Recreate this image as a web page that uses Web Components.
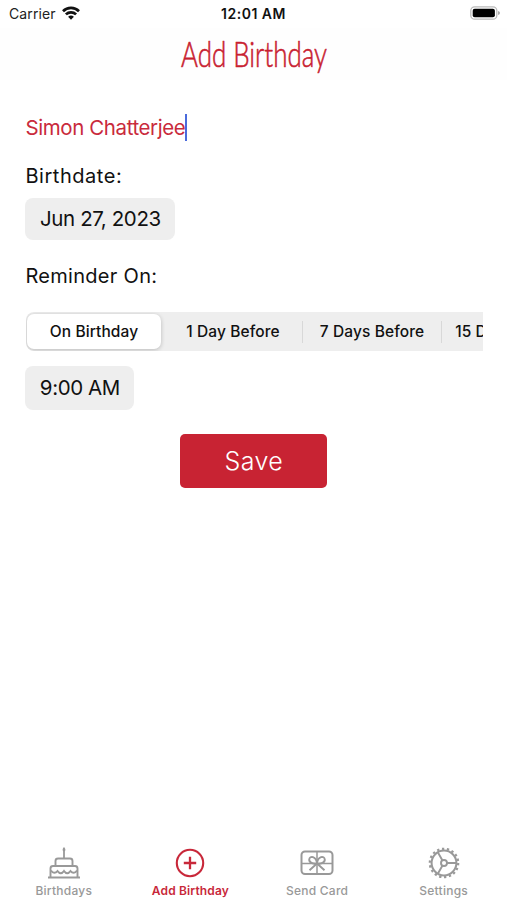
<!DOCTYPE html>
<html lang="en">
<head>
<meta charset="utf-8">
<title>Add Birthday</title>
<style>
    body {
        margin: 0;
        background: #fff;
        color: #111;
        font-family: Inter, "Liberation Sans", sans-serif;
    }
</style>
</head>
<body>
<birthday-app></birthday-app>

<script>
const icons = {
    cake: `<path d="M16 11V4" stroke-width="1.800"/><path d="M16 0c2 2.200 1.600 4.300 0 4.300s-2-2.100 0-4.300" fill="currentColor" stroke="none"/>
        <path d="M7.500 19v-5q0-2.500 2.500-2.500h12q2.500 0 2.500 2.500v5M2.500 30v-8.500q0-2.500 2.500-2.500h22q2.500 0 2.500 2.500V30M0 30.500h32"/>
        <path d="M3 23.500c2 3 4.500 3 6.500.500c2 3 4.500 3 6.500 0c2 3 4.500 3 6.500 0c2 2.500 4.500 2.500 6.500-.500"/>`,
    add: `<circle cx="16" cy="16" r="13.200" stroke-width="2.100"/><path d="M9.800 16h12.400M16 9.800v12.400" stroke-width="2.300"/>`,
    card: `<rect x="0.500" y="4.500" width="31" height="22.500" rx="3.500" stroke-width="2"/>
        <path d="M16 4.500v22.500M0.500 16.500h31" stroke-width="1.500"/>
        <path d="M16 16.500c-4 .500-8-1-7.800-4c.500-4.200 7-3.500 7.800 4c.800-7.500 7.300-8.200 7.800-4c.200 3-3.800 4.500-7.800 4l-7.500 6.700M16 16.500l7.500 6.700" stroke-width="1.900"/>`,
    gear: `<circle cx="16" cy="16" r="12.400" stroke-width="2"/>
        <circle cx="16" cy="16" r="14.200" stroke-width="2.200" stroke-dasharray="2.300 2.656"/>
        <circle cx="16" cy="16" r="3" stroke-width="1.900"/>
        <path d="M19 16h9M14.500 13.400l-4.700-8.100M14.500 18.600l-4.700 8.100" stroke-width="1.900"/>`
};

class StatusBar extends HTMLElement {
    constructor() {
        super();
        this.attachShadow({ mode: 'open' });
    }

    connectedCallback() {
        this.shadowRoot.innerHTML = `
        <style>
        :host {
            display: grid;
            grid-template-columns: 1fr auto 1fr;
            align-items: center;
            height: 28px;
            padding: 0 7px 0 9px;
            font-size: 14px;
            line-height: 28px;
        }
        .carrier {
            display: flex;
            align-items: center;
            gap: 6px;
            color: #222;
            letter-spacing: 0.1px;
        }
        .carrier svg { margin-top: -2px; }
        .time {
            margin-left: -2px;
            font-weight: 600;
            letter-spacing: 0.5px;
        }
        .battery { justify-self: end; margin-top: -2px; }
        svg { display: block; }
        </style>
        <div class="carrier">
            <span>Carrier</span>
            <svg width="18" height="14" viewBox="0 0 18 14" fill="none" stroke="#111" stroke-width="2.700">
                <path d="M1 5.200a11.500 11.500 0 0 1 16 0M3.900 8.400a7.300 7.300 0 0 1 10.200 0"/>
                <path d="M9 13.800l-2.900-3.100a4.300 4.300 0 0 1 5.800 0z" fill="#111" stroke="none"/>
            </svg>
        </div>
        <div class="time">12:01 AM</div>
        <svg class="battery" width="30" height="14" viewBox="0 0 30 14">
            <rect x=".8" y=".8" width="26" height="12.400" rx="3.800" fill="#fff" stroke="#bbb" stroke-width="1.300"/>
            <rect x="2.700" y="2.700" width="22.200" height="8.600" rx="2" fill="#000"/>
            <path d="M28 5q2 .4 2 2t-2 2z" fill="#aaa"/>
        </svg>
        `;
    }
}

class PageTitle extends HTMLElement {
    constructor() {
        super();
        this.attachShadow({ mode: 'open' });
    }

    connectedCallback() {
        this.shadowRoot.innerHTML = `
        <style>
        :host {
            display: flex;
            justify-content: center;
            height: 52px;
            color: #c8202f;
            background: #fefefe;
        }
        svg { display: block; overflow: visible; }
        text {
            font-family: Lato, sans-serif;
            font-size: 35px;
            font-weight: 300;
            fill: currentColor;
            stroke: currentColor;
            stroke-width: 0.6px;
            stroke-linejoin: round;
        }
        </style>
        <svg width="146" height="52">
            <text x="0" y="38.500" textLength="146" lengthAdjust="spacingAndGlyphs">${this.textContent}</text>
        </svg>
        `;
    }
}

class NameField extends HTMLElement {
    constructor() {
        super();
        this.attachShadow({ mode: 'open' });
    }

    connectedCallback() {
        this.shadowRoot.innerHTML = `
        <style>
        :host {
            display: flex;
            align-items: center;
            height: 28px;
            color: #c92a3c;
            font-size: 20.500px;
            letter-spacing: -0.400px;
        }
        .caret {
            width: 2.500px;
            height: 27px;
            margin-left: -0.500px;
            background: #4a6bdc;
        }
        </style>
        <slot></slot><span class="caret"></span>
        `;
    }
}

class ValuePill extends HTMLElement {
    constructor() {
        super();
        this.attachShadow({ mode: 'open' });
    }

    connectedCallback() {
        this.shadowRoot.innerHTML = `
        <style>
        :host {
            display: flex;
            align-items: center;
            justify-content: center;
            box-sizing: border-box;
            padding-bottom: 1px;
            border-radius: 8px;
            background: #eee;
            font-size: 20.500px;
            letter-spacing: -0.400px;
            white-space: nowrap;
        }
        </style>
        <slot></slot>
        `;
    }
}

class SegmentBar extends HTMLElement {
    constructor() {
        super();
        this.attachShadow({ mode: 'open' });
    }

    connectedCallback() {
        const items = this.getAttribute('items').split('|');
        this.shadowRoot.innerHTML = `
        <style>
        :host {
            display: flex;
            align-items: center;
            height: 39px;
            overflow: hidden;
            box-sizing: border-box;
            padding: 2px 0 2px 1px;
            border-radius: 8px 0 0 8px;
            background: #eee;
            font-size: 15.500px;
            font-weight: 500;
            letter-spacing: 0.100px;
        }
        .item {
            flex: 0 0 138px;
            line-height: 35px;
            text-align: center;
            white-space: nowrap;
        }
        .item.active {
            flex-basis: 134px;
            margin-right: 3px;
            border-radius: 7px;
            background: #fff;
            box-shadow: 0 1px 4px rgba(0, 0, 0, 0.22);
        }
        .line {
            flex: 0 0 1px;
            height: 22px;
            background: #d8d8d8;
        }
        </style>
        ${items.map((item, i) => `${i > 1 ? '<i class="line"></i>' : ''}<div class="item${i === 0 ? ' active' : ''}">${item}</div>`).join('')}
        `;
    }
}

class SaveButton extends HTMLElement {
    constructor() {
        super();
        this.attachShadow({ mode: 'open' });
    }

    connectedCallback() {
        this.shadowRoot.innerHTML = `
        <style>
        :host { display: block; }
        button {
            display: block;
            width: 147px;
            height: 54px;
            margin: 0 auto;
            padding: 0;
            border: 0;
            border-radius: 5px;
            background: #c82333;
            color: #fff;
            font: 350 25px/54px Inter, sans-serif;
            letter-spacing: 0.400px;
            cursor: pointer;
        }
        </style>
        <button type="button"><slot></slot></button>
        `;
    }
}

class TabItem extends HTMLElement {
    constructor() {
        super();
        this.attachShadow({ mode: 'open' });
    }

    connectedCallback() {
        this.shadowRoot.innerHTML = `
        <style>
        :host {
            display: flex;
            flex: 1 0 0;
            flex-direction: column;
            align-items: center;
            color: #999;
            font-size: 12px;
            font-weight: 500;
            line-height: 16px;
            letter-spacing: 0.250px;
            white-space: nowrap;
        }
        :host([active]) {
            color: #c8283a;
            font-weight: 600;
            letter-spacing: 0.150px;
        }
        svg {
            display: block;
            margin-bottom: 4px;
            overflow: visible;
        }
        </style>
        <svg width="32" height="32" viewBox="0 0 32 32" fill="none" stroke="currentColor" stroke-width="1.900">${icons[this.getAttribute('icon')]}</svg>
        <slot></slot>
        `;
    }
}

class BirthdayApp extends HTMLElement {
    constructor() {
        super();
        this.attachShadow({ mode: 'open' });
    }

    connectedCallback() {
        this.shadowRoot.innerHTML = `
        <style>
        :host {
            display: flex;
            flex-direction: column;
            height: 900px;
            overflow: hidden;
        }
        main {
            flex: 1;
            padding: 33px 24.500px 0 25.400px;
        }
        h2 {
            margin: 0;
            font-size: 20px;
            font-weight: 400;
            line-height: 26px;
            letter-spacing: 0.550px;
        }
        .birthdate { margin-top: 22px; }
        .date { width: 150px; height: 42px; margin-top: 9px; }
        .reminder { margin-top: 23px; letter-spacing: 0.300px; }
        segment-bar { margin: 23px 0 0 0.600px; }
        .clock { width: 109px; height: 44px; margin-top: 15px; }
        save-button { margin-top: 24px; }
        nav {
            display: flex;
            height: 53px;
            padding-left: 0.500px;
        }
        </style>
        <status-bar></status-bar>
        <page-title>Add Birthday</page-title>
        <main>
            <name-field>Simon Chatterjee</name-field>
            <h2 class="birthdate">Birthdate:</h2>
            <value-pill class="date">Jun 27, 2023</value-pill>
            <h2 class="reminder">Reminder On:</h2>
            <segment-bar items="On Birthday|1 Day Before|7 Days Before|15 Days Before"></segment-bar>
            <value-pill class="clock">9:00 AM</value-pill>
            <save-button>Save</save-button>
        </main>
        <nav>
            <tab-item icon="cake">Birthdays</tab-item>
            <tab-item icon="add" active>Add Birthday</tab-item>
            <tab-item icon="card">Send Card</tab-item>
            <tab-item icon="gear">Settings</tab-item>
        </nav>
        `;
    }
}

customElements.define("status-bar", StatusBar);
customElements.define("page-title", PageTitle);
customElements.define("name-field", NameField);
customElements.define("value-pill", ValuePill);
customElements.define("segment-bar", SegmentBar);
customElements.define("save-button", SaveButton);
customElements.define("tab-item", TabItem);
customElements.define("birthday-app", BirthdayApp);
</script>
</body>
</html>
